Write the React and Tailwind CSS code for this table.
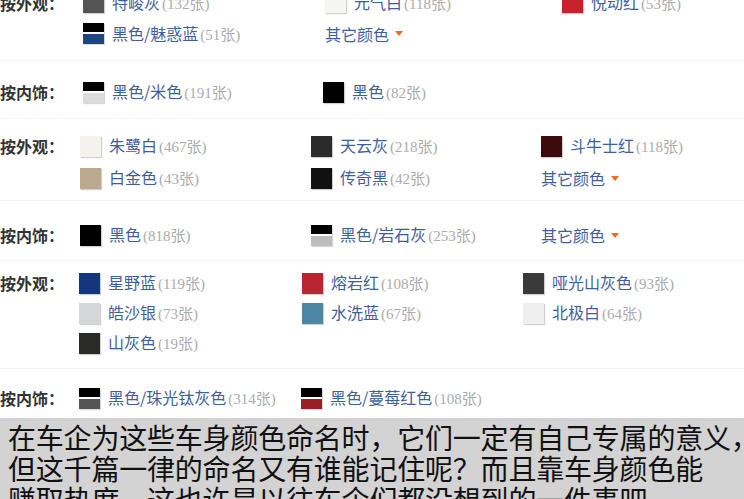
const sans = "font-['Noto_Sans_CJK_SC','Noto_Sans',sans-serif]";
const serif = "font-['Liberation_Serif','Noto_Sans_CJK_SC',serif]";

function Swatch({ top, bottom }) {
  if (bottom) {
    return (
      <span className="flex flex-col w-[21px] h-[21px] shrink-0 shadow-[1px_1px_1px_#d8d8d8]">
        <span className={`h-[9px] ${top}`}></span>
        <span className="h-[2px] bg-white"></span>
        <span className={`flex-1 ${bottom}`}></span>
      </span>
    );
  }
  return <span className={`block w-[21px] h-[21px] shrink-0 shadow-[1px_1px_1px_#d0d0d0] ${top}`}></span>;
}

function Item({ c, c2, name, n }) {
  return (
    <div className="flex items-center gap-[8px] whitespace-nowrap">
      <Swatch top={c} bottom={c2} />
      <span className={`text-[16px] text-[#3f5e9e] ${sans}`}>
        {name}
        <span className={`ml-[2px] text-[15px] text-[#ababab] ${serif}`}>({n}张)</span>
      </span>
    </div>
  );
}

function More() {
  return (
    <div className={`flex items-center gap-[6px] text-[16px] text-[#3f5e9e] ${sans}`}>
      其它颜色
      <span className="w-0 h-0 border-l-[4px] border-r-[4px] border-t-[5px] border-l-transparent border-r-transparent border-t-[#f26a1b]"></span>
    </div>
  );
}

function Section({ label, cols, children, extra }) {
  return (
    <div className={`border-b border-[#f4f4f4] ${extra}`}>
      <div className={`grid items-center ${cols}`}>
        <div className={`text-[16px] font-bold text-[#333] ${sans}`}>{label}</div>
        {children}
      </div>
    </div>
  );
}

export default function App() {
  return (
    <div className="w-[744px] h-[499px] overflow-hidden bg-white">
      <div className="mt-[-13px]">
        <Section label="按外观：" cols="grid-cols-[83px_242px_237px_1fr] auto-rows-[31px]" extra="pt-0 pb-[11px]">
          <Item c="bg-[#545454]" name="特峻灰" n="132" />
          <Item c="bg-[#f5f5f3]" name="元气白" n="118" />
          <Item c="bg-[#c9222b]" name="悦动红" n="53" />
          <div></div>
          <Item c="bg-black" c2="bg-[#1d4484]" name="黑色/魅惑蓝" n="51" />
          <More />
        </Section>
        <Section label="按内饰：" cols="grid-cols-[83px_240px_1fr] auto-rows-[30px]" extra="pt-[16px] pb-[11px]">
          <Item c="bg-black" c2="bg-[#dcdcdc]" name="黑色/米色" n="191" />
          <Item c="bg-black" name="黑色" n="82" />
        </Section>
        <Section label="按外观：" cols="grid-cols-[80px_231px_230px_1fr] auto-rows-[32px]" extra="pt-[11px] pb-[6px]">
          <Item c="bg-[#f4f2ed]" name="朱鹭白" n="467" />
          <Item c="bg-[#2b2b2b]" name="天云灰" n="218" />
          <Item c="bg-[#3d0b0b]" name="斗牛士红" n="118" />
          <div></div>
          <Item c="bg-[#baa98c]" name="白金色" n="43" />
          <Item c="bg-[#111]" name="传奇黑" n="42" />
          <More />
        </Section>
        <Section label="按内饰：" cols="grid-cols-[80px_231px_230px_1fr] auto-rows-[30px]" extra="pt-[19px] pb-[10px]">
          <Item c="bg-black" name="黑色" n="818" />
          <Item c="bg-black" c2="bg-[#bdbdbd]" name="黑色/岩石灰" n="253" />
          <More />
        </Section>
        <Section label="按外观：" cols="grid-cols-[79px_223px_221px_1fr] auto-rows-[30px]" extra="pt-[7px] pb-[10px]">
          <Item c="bg-[#13367f]" name="星野蓝" n="119" />
          <Item c="bg-[#b92533]" name="熔岩红" n="108" />
          <Item c="bg-[#3a3a3a]" name="哑光山灰色" n="93" />
          <div></div>
          <Item c="bg-[#d6d7d9]" name="皓沙银" n="73" />
          <Item c="bg-[#4e86a5]" name="水洗蓝" n="67" />
          <Item c="bg-[#efefef]" name="北极白" n="64" />
          <div></div>
          <Item c="bg-[#2a2a26]" name="山灰色" n="19" />
        </Section>
        <Section label="按内饰：" cols="grid-cols-[79px_222px_1fr] auto-rows-[30px]" extra="border-b-0 pt-[14px] pb-[5px]">
          <Item c="bg-black" c2="bg-[#555]" name="黑色/珠光钛灰色" n="314" />
          <Item c="bg-black" c2="bg-[#9d1d24]" name="黑色/蔓莓红色" n="108" />
        </Section>
      </div>
      <div className={`bg-[#d3d3d3] text-[#111] text-[28px] leading-[31px] pl-[8px] pt-[4px] h-[200px] tracking-[-0.2px] ${sans}`}>
        <p className="whitespace-nowrap">在车企为这些车身颜色命名时，它们一定有自己专属的意义，</p>
        <p className="whitespace-nowrap">但这千篇一律的命名又有谁能记住呢？而且靠车身颜色能</p>
        <p className="whitespace-nowrap">赚取热度，这也许是以往车企们都没想到的一件事吧。</p>
      </div>
    </div>
  );
}
